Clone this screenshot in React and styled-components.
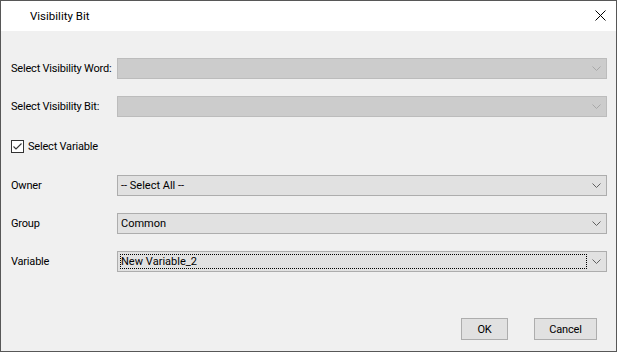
import React from 'react'
import styled, { createGlobalStyle } from 'styled-components'

const GlobalStyle = createGlobalStyle`
  html, body {
    margin: 0;
    padding: 0;
    background: #ffffff;
  }
  body {
    font-family: Roboto, "Liberation Sans", sans-serif;
    font-size: 11px;
    letter-spacing: -0.2px;
    color: #000000;
  }
`

const Window = styled.div`
  width: 617px;
  height: 352px;
  box-sizing: border-box;
  border: 1px solid #575757;
  display: flex;
  flex-direction: column;
  background: #f0f0f0;
`

const TitleBar = styled.div`
  height: 30px;
  flex-shrink: 0;
  background: #ffffff;
  display: flex;
  align-items: center;
  justify-content: space-between;
  padding: 0 10px 0 29px;
`

const Title = styled.div`
  font-size: 11.5px;
  letter-spacing: 0;
  color: #000;
  margin-top: -1px;
`

const Close = styled.svg`
  width: 11px;
  height: 11px;
  margin-top: -1px;
`

const Body = styled.div`
  flex: 1;
  display: flex;
  flex-direction: column;
  padding: 27px 9px 11px 10px;
`

const Form = styled.div`
  display: flex;
  flex-direction: column;
  gap: 17px;
`

const Row = styled.div`
  display: grid;
  grid-template-columns: 106px 1fr;
  align-items: center;
  height: 21px;
`

const CheckRow = styled.label`
  display: flex;
  align-items: center;
  gap: 4px;
  height: 24px;
`

const Label = styled.span`
  white-space: nowrap;
`

const Combo = styled.div`
  height: 21px;
  box-sizing: border-box;
  border: 1px solid ${p => (p.disabled ? '#bcbcbc' : '#adadad')};
  background: ${p => (p.disabled ? '#cccccc' : '#e1e1e1')};
  display: flex;
  align-items: center;
  padding: 0 5px 0 2px;
`

const ComboText = styled.div`
  flex: 1;
  height: 15px;
  line-height: 13px;
  padding: 0;
  box-sizing: border-box;
  margin-right: 5px;
  letter-spacing: 0;
  font-variant-ligatures: none;
  font-kerning: none;
  border: 1px dotted ${p => (p.focused ? '#000' : 'transparent')};
`

const Chevron = ({ disabled }) => (
  <svg width="9" height="5" viewBox="0 0 9 5">
    <path
      d="M0.5 0.5 L4.5 4.5 L8.5 0.5"
      fill="none"
      stroke={disabled ? '#a8a8a8' : '#606060'}
      strokeWidth="1"
    />
  </svg>
)

const Box = styled.span`
  width: 13px;
  height: 13px;
  box-sizing: border-box;
  border: 1px solid #333333;
  background: #ffffff;
  display: flex;
  align-items: center;
  justify-content: center;
`

const Footer = styled.div`
  margin-top: auto;
  display: flex;
  justify-content: flex-end;
  gap: 26px;
  padding-right: 10px;
`

const Button = styled.button`
  height: 22px;
  width: ${p => p.w}px;
  box-sizing: border-box;
  border: 1px solid #adadad;
  background: #e1e1e1;
  font-family: inherit;
  font-size: 11px;
  letter-spacing: inherit;
  color: #000;
  padding: 0;
`

const Select = ({ value, disabled, focused }) => (
  <Combo disabled={disabled}>
    <ComboText focused={focused}>{value}</ComboText>
    <Chevron disabled={disabled} />
  </Combo>
)

export default function App() {
  return (
    <>
      <GlobalStyle />
      <Window>
        <TitleBar>
          <Title>Visibility Bit</Title>
          <Close viewBox="0 0 11 11">
            <path d="M0.5 0.5 L10.5 10.5 M10.5 0.5 L0.5 10.5" stroke="#000" strokeWidth="1" />
          </Close>
        </TitleBar>
        <Body>
          <Form>
            <Row>
              <Label>Select Visibility Word:</Label>
              <Select disabled />
            </Row>
            <Row>
              <Label>Select Visibility Bit:</Label>
              <Select disabled />
            </Row>
            <CheckRow>
              <Box>
                <svg width="11" height="11" viewBox="0 0 11 11">
                  <path d="M1.5 5.5 L4 8 L9.5 2.5" fill="none" stroke="#333" strokeWidth="1.1" />
                </svg>
              </Box>
              <Label>Select Variable</Label>
            </CheckRow>
            <Row>
              <Label>Owner</Label>
              <Select value="-- Select All --" />
            </Row>
            <Row>
              <Label>Group</Label>
              <Select value="Common" />
            </Row>
            <Row>
              <Label>Variable</Label>
              <Select value="New Variable_2" focused />
            </Row>
          </Form>
          <Footer>
            <Button w={47}>OK</Button>
            <Button w={63}>Cancel</Button>
          </Footer>
        </Body>
      </Window>
    </>
  )
}
